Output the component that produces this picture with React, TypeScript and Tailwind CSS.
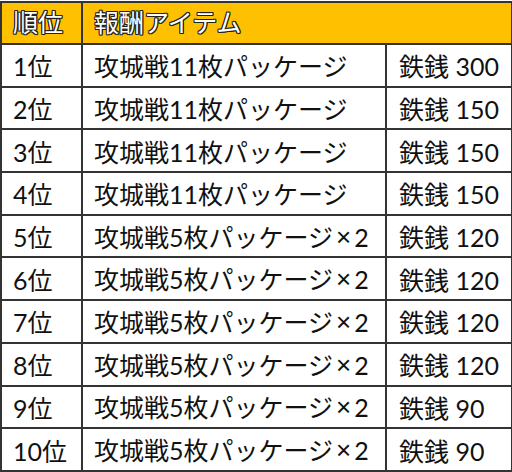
const rows: [string, string, boolean, string][] = [
  ["1位", "攻城戦11枚パッケージ", false, "鉄銭 300"],
  ["2位", "攻城戦11枚パッケージ", false, "鉄銭 150"],
  ["3位", "攻城戦11枚パッケージ", false, "鉄銭 150"],
  ["4位", "攻城戦11枚パッケージ", false, "鉄銭 150"],
  ["5位", "攻城戦5枚パッケージ", true, "鉄銭 120"],
  ["6位", "攻城戦5枚パッケージ", true, "鉄銭 120"],
  ["7位", "攻城戦5枚パッケージ", true, "鉄銭 120"],
  ["8位", "攻城戦5枚パッケージ", true, "鉄銭 120"],
  ["9位", "攻城戦5枚パッケージ", true, "鉄銭 90"],
  ["10位", "攻城戦5枚パッケージ", true, "鉄銭 90"],
];

const outline =
  "[text-shadow:-1px_-1px_0_#222,1px_-1px_0_#222,-1px_1px_0_#222,1px_1px_0_#222,0_1px_0_#222,0_-1px_0_#222,1px_0_0_#222,-1px_0_0_#222]";

export default function App() {
  return (
    <div className="w-[512px] h-[472px] bg-white pt-px font-['Lato','Noto_Sans_CJK_JP',sans-serif] text-[25px] text-[#111]">
      <table className="w-[511px] border-collapse table-fixed">
        <colgroup>
          <col className="w-[81px]" />
          <col className="w-[304px]" />
          <col className="w-[126px]" />
        </colgroup>
        <thead>
          <tr className="h-[42px] bg-[#ffc000]">
            <th className={`border-2 border-[#333] text-left font-normal pl-[11px] text-white ${outline}`}>順位</th>
            <th colSpan={2} className={`border-2 border-[#333] text-left font-normal pl-[11px] text-white ${outline}`}>
              報酬アイテム
            </th>
          </tr>
        </thead>
        <tbody>
          {rows.map(([rank, item, times2, reward]) => (
            <tr key={rank} className="h-[42.7px]">
              <td className="border-2 border-[#333] pl-[11px] leading-none pt-[3px]">{rank}</td>
              <td className="border-2 border-[#333] pl-[11px] leading-none pt-[3px] whitespace-nowrap">
                {item}
                {times2 && (
                  <>
                    <span className="inline-block ml-[3px] mr-[3px] text-[26px] font-['Liberation_Sans',sans-serif] -translate-y-[1px]">×</span>2
                  </>
                )}
              </td>
              <td className="border-2 border-[#333] pl-[12px] leading-none pt-[3px] whitespace-nowrap">{reward}</td>
            </tr>
          ))}
        </tbody>
      </table>
    </div>
  );
}
